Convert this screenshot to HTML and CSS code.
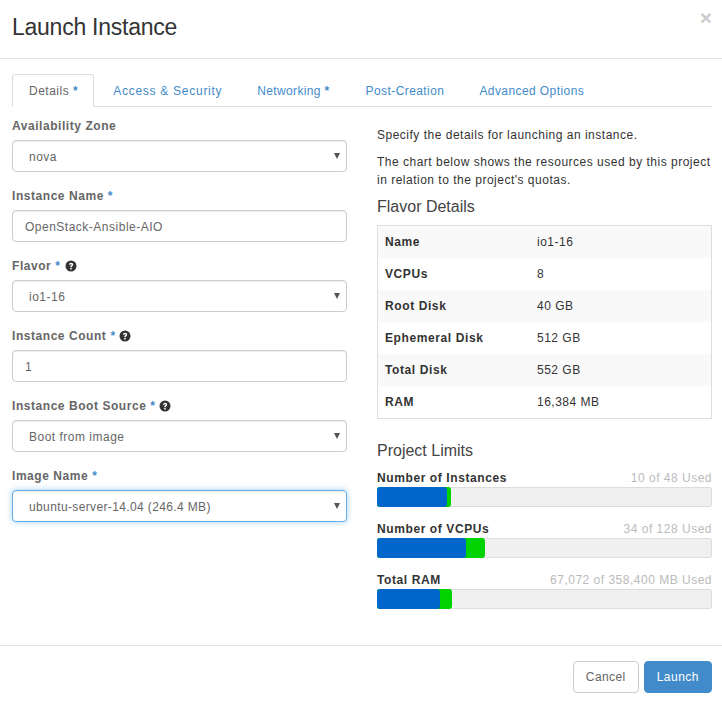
FILE: index.html
```html
<!DOCTYPE html>
<html lang="en">
<head>
<meta charset="utf-8">
<title>Launch Instance</title>
<link rel="stylesheet" href="styles.css">
</head>
<body>
<div class="modal">
  <header class="modal-header">
    <h1>Launch Instance</h1>
    <span class="close">×</span>
  </header>
  <div class="modal-body">
    <ul class="tabs">
      <li class="tab active">Details <span class="req">*</span></li>
      <li class="tab tab-wide">Access &amp; Security</li>
      <li class="tab tab-tight">Networking <span class="req">*</span></li>
      <li class="tab">Post-Creation</li>
      <li class="tab">Advanced Options</li>
    </ul>
    <div class="columns">
      <form class="form-col">
        <div class="field">
          <label>Availability Zone</label>
          <div class="select"><select><option>nova</option></select></div>
        </div>
        <div class="field">
          <label>Instance Name <span class="req">*</span></label>
          <input class="input" type="text" value="OpenStack-Ansible-AIO">
        </div>
        <div class="field">
          <label>Flavor <span class="req">*</span>
            <svg class="help" viewBox="0 0 12 12"><circle cx="6" cy="6" r="5.5" fill="#333"/><path d="M3.9 4.7C4 3.4 4.9 2.7 6.1 2.7c1.200 0 2.100.7 2.100 1.800 0 1.700-1.500 1.500-1.500 2.700H5.200c0-1.900 1.400-1.800 1.400-2.700 0-.4-.2-.6-.6-.6s-.6.3-.7.8zM5.200 7.900h1.500v1.500H5.200z" fill="#fff"/></svg>
          </label>
          <div class="select"><select><option>io1-16</option></select></div>
        </div>
        <div class="field">
          <label>Instance Count <span class="req">*</span>
            <svg class="help help-tight" viewBox="0 0 12 12"><circle cx="6" cy="6" r="5.5" fill="#333"/><path d="M3.9 4.7C4 3.4 4.9 2.7 6.1 2.7c1.200 0 2.100.7 2.100 1.800 0 1.700-1.500 1.500-1.500 2.700H5.200c0-1.900 1.400-1.800 1.400-2.700 0-.4-.2-.6-.6-.6s-.6.3-.7.8zM5.200 7.900h1.500v1.500H5.200z" fill="#fff"/></svg>
          </label>
          <input class="input" type="text" value="1">
        </div>
        <div class="field">
          <label>Instance Boot Source <span class="req">*</span>
            <svg class="help help-tight" viewBox="0 0 12 12"><circle cx="6" cy="6" r="5.5" fill="#333"/><path d="M3.9 4.7C4 3.4 4.9 2.7 6.1 2.7c1.200 0 2.100.7 2.100 1.800 0 1.700-1.500 1.500-1.500 2.700H5.200c0-1.900 1.400-1.800 1.400-2.700 0-.4-.2-.6-.6-.6s-.6.3-.7.8zM5.200 7.900h1.500v1.500H5.200z" fill="#fff"/></svg>
          </label>
          <div class="select"><select><option>Boot from image</option></select></div>
        </div>
        <div class="field">
          <label>Image Name <span class="req">*</span></label>
          <div class="select focused"><select><option>ubuntu-server-14.04 (246.4 MB)</option></select></div>
        </div>
      </form>
      <aside class="info-col">
        <p class="first">Specify the details for launching an instance.</p>
        <p>The chart below shows the resources used by this project in relation to the project's quotas.</p>
        <h2>Flavor Details</h2>
        <table class="flavor">
          <tr><th>Name</th><td>io1-16</td></tr>
          <tr><th>VCPUs</th><td>8</td></tr>
          <tr><th>Root Disk</th><td>40 GB</td></tr>
          <tr><th>Ephemeral Disk</th><td>512 GB</td></tr>
          <tr><th>Total Disk</th><td>552 GB</td></tr>
          <tr><th>RAM</th><td>16,384 MB</td></tr>
        </table>
        <h2 class="limits-title">Project Limits</h2>
        <div class="limit">
          <div class="limit-head"><strong>Number of Instances</strong><span>10 of 48 Used</span></div>
          <div class="bar"><div class="fill green" style="width:74px"><div class="fill blue" style="width:70px"></div></div></div>
        </div>
        <div class="limit">
          <div class="limit-head"><strong>Number of VCPUs</strong><span>34 of 128 Used</span></div>
          <div class="bar"><div class="fill green" style="width:108px"><div class="fill blue" style="width:89px"></div></div></div>
        </div>
        <div class="limit">
          <div class="limit-head"><strong>Total RAM</strong><span>67,072 of 358,400 MB Used</span></div>
          <div class="bar"><div class="fill green" style="width:75px"><div class="fill blue" style="width:63px"></div></div></div>
        </div>
      </aside>
    </div>
  </div>
  <footer class="modal-footer">
    <button class="btn" type="button">Cancel</button>
    <button class="btn primary" type="button">Launch</button>
  </footer>
</div>
</body>
</html>
```
FILE: styles.css
```css
* { box-sizing: border-box; }
html, body { margin: 0; padding: 0; background: #fff; }
body {
  font-family: "Liberation Sans", Arial, sans-serif;
  font-size: 12px;
  line-height: 18px;
  letter-spacing: 0.5px;
  color: #333;
  overflow: hidden;
}
.modal { width: 722px; height: 706px; display: flex; flex-direction: column; }
.modal-header {
  height: 59px;
  padding: 0 10px 0 12px;
  border-bottom: 1px solid #e5e5e5;
  display: flex;
  justify-content: space-between;
  align-items: flex-start;
}
.modal-header h1 {
  margin: 13px 0 0;
  font-size: 23px;
  line-height: 28px;
  font-weight: 400;
  letter-spacing: -0.25px;
}
.close {
  font-size: 21px;
  line-height: 21px;
  margin-top: 7px;
  font-weight: 700;
  color: #000;
  opacity: 0.2;
  letter-spacing: 0;
}
.modal-body { flex: 1; padding: 15px 10px 0 12px; }
.tabs {
  list-style: none;
  margin: 0;
  padding: 0;
  height: 33px;
  display: flex;
  border-bottom: 1px solid #ddd;
}
.tab {
  height: 33px;
  padding: 7px 15px 7px 16px;
  margin-right: 2px;
  border: 1px solid transparent;
  color: #428bca;
  white-space: nowrap;
  letter-spacing: 0.42px;
}
.tab-wide { letter-spacing: 0.73px; }
.tab-tight { letter-spacing: 0.35px; padding-right: 16px; }
.tab.active {
  color: #666;
  background: #fff;
  border-color: #ddd #ddd #fff;
  border-radius: 3px 3px 0 0;
  letter-spacing: 0.5px;
}
.req { color: #428bca; font-weight: 700; }
.columns { display: flex; justify-content: space-between; }
.form-col { width: 335px; padding-top: 10px; }
.info-col { width: 335px; padding-top: 19px; }
.field { height: 70px; }
.field label {
  display: flex;
  align-items: center;
  gap: 4px;
  height: 18px;
  margin-bottom: 5px;
  font-weight: 700;
  color: #666;
  letter-spacing: 0.55px;
}
.help { width: 12px; height: 12px; }
.help-tight { margin-left: -1px; }
.select { position: relative; }
.select::after {
  content: "";
  position: absolute;
  right: 7px;
  top: 13px;
  border-left: 3px solid transparent;
  border-right: 3px solid transparent;
  border-top: 6px solid #555;
  pointer-events: none;
}
.select select, .input {
  display: block;
  width: 100%;
  height: 32px;
  border: 1px solid #ccc;
  border-radius: 4px;
  background: #fff;
  color: #666;
  font-family: inherit;
  font-size: 12px;
  letter-spacing: 0.5px;
  box-shadow: inset 0 1px 1px rgba(0, 0, 0, 0.075);
  outline: none;
}
.select select { appearance: none; padding: 2px 16px 0; }
.input { padding: 2px 12px 0; }
.focused select {
  letter-spacing: 0.37px;
  border-color: #66afe9;
  box-shadow: inset 0 1px 1px rgba(0, 0, 0, 0.075), 0 0 6px rgba(102, 175, 233, 0.6);
}
.info-col p { margin: 0 0 9px; line-height: 18px; }
.info-col h2 { font-size: 16px; line-height: 18px; font-weight: 300; margin: 0; letter-spacing: 0; color: #444; }
.flavor {
  width: 100%;
  margin-top: 9px;
  border-collapse: separate;
  border-spacing: 0;
  border: 1px solid #ddd;
}
.flavor th, .flavor td { height: 32px; padding: 0 7px 1px; text-align: left; }
.flavor th { width: 152px; font-weight: 700; letter-spacing: 0.6px; }
.flavor tr:nth-child(odd) { background: #f9f9f9; }
.limits-title { padding-top: 23px; }
.limit { margin-bottom: 13px; }
.limits-title + .limit { margin-top: 9px; }
.limit-head { display: flex; justify-content: space-between; height: 18px; line-height: 18px; }
.limit-head strong { color: #333; letter-spacing: 0.6px; }
.limit-head span { color: #bbb; }
.bar {
  height: 20px;
  background: #f0f0f0;
  box-shadow: inset 0 0 0 1px #ddd;
  border-radius: 3px;
}
.fill { height: 20px; border-radius: 3px; }
.green { background: #00d300; }
.blue { background: #0066cc; }
.modal-footer {
  height: 61px;
  border-top: 1px solid #e5e5e5;
  padding: 15px 10px 0 0;
  display: flex;
  justify-content: flex-end;
  gap: 5px;
}
.btn {
  height: 32px;
  padding: 0 12px;
  border: 1px solid #ccc;
  border-radius: 4px;
  background: #fff;
  color: #666;
  font-family: inherit;
  font-size: 12px;
  letter-spacing: 0.4px;
}
.btn.primary { background: #428bca; border-color: #428bca; color: #fff; letter-spacing: 0.5px; }
```
